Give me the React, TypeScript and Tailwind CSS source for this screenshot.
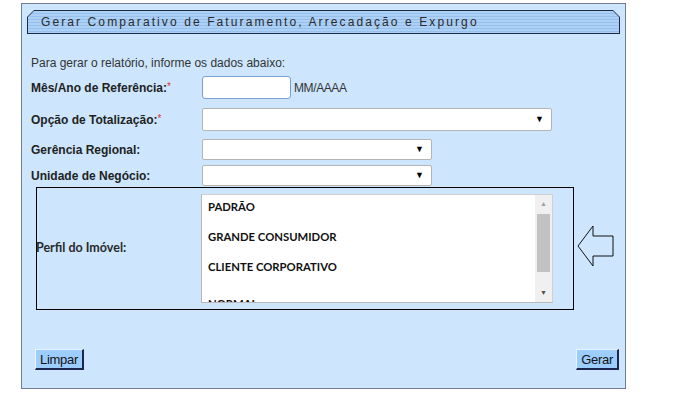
import React from "react"

const arial = "font-['Liberation_Sans',Arial,sans-serif]"

const SelectBox = ({ width }: { width: string }) => (
	<div
		className={`${width} h-full bg-white border border-[#b4b4b4] rounded-[2px] flex items-center justify-end pr-[7px]`}
	>
		<span className="text-[9px] leading-none text-black">▼</span>
	</div>
)

const Label = ({ text, required }: { text: string; required?: boolean }) => (
	<div className="w-[171px] shrink-0 text-[12px] font-bold text-[#222]">
		{text}
		{required && <span className="text-[#e03030] font-normal text-[10px] align-top">*</span>}
	</div>
)

const Button = ({ children }: { children: React.ReactNode }) => (
	<button
		className={`h-[21px] px-[4px] bg-[#9ccdfd] text-[13px] text-[#111] leading-none border border-t-[#e8f4ff] border-l-[#e8f4ff] border-b-[#1c2450] border-r-[#1c2450] border-b-2 border-r-2 tracking-[-0.3px] ${arial}`}
	>
		{children}
	</button>
)

const profiles = ["PADRÃO", "GRANDE CONSUMIDOR", "CLIENTE CORPORATIVO"]

export default function App() {
	return (
		<div className={`w-[676px] h-[400px] bg-white pt-[3px] pl-[21px] ${arial}`}>
			<div className="w-[605px] h-[386px] bg-[#cde6fd] border border-[#6f7f98] flex flex-col">
				{/* title bar */}
				<div className="mt-[6px] ml-[5px] w-[593px] h-[24px] bg-[#1b2a45] [clip-path:polygon(7px_0,calc(100%-7px)_0,100%_7px,100%_100%,0_100%,0_7px)] p-[1px]">
					<div className="w-full h-full bg-[image:repeating-linear-gradient(180deg,#acd0f6_0px,#acd0f6_2px,#98c0ec_2px,#98c0ec_3px)] [clip-path:polygon(6px_0,calc(100%-6px)_0,100%_6px,100%_100%,0_100%,0_6px)] flex items-center pl-[13px]">
						<span className="text-[12px] tracking-[2.1px] text-[#2a2a2a]">
							Gerar Comparativo de Faturamento, Arrecadação e Expurgo
						</span>
					</div>
				</div>

				<div className="pl-[9px] flex flex-col">
					<div className="mt-[22px] text-[12px] leading-[14px] text-[#333]">
						Para gerar o relatório, informe os dados abaixo:
					</div>

					<div className="mt-[6px] h-[23px] flex items-center">
						<Label text="Mês/Ano de Referência:" required />
						<div className="w-[89px] h-full bg-white border border-[#7b9ed6] rounded-[3px]" />
						<span className="ml-[3px] text-[12px] text-[#333] tracking-[-0.4px]">MM/AAAA</span>
					</div>

					<div className="mt-[9px] h-[23px] flex items-center">
						<Label text="Opção de Totalização:" required />
						<SelectBox width="w-[350px]" />
					</div>

					<div className="mt-[8px] h-[21px] flex items-center">
						<Label text="Gerência Regional:" />
						<SelectBox width="w-[230px]" />
					</div>

					<div className="mt-[5px] h-[21px] flex items-center">
						<Label text="Unidade de Negócio:" />
						<SelectBox width="w-[230px]" />
					</div>

					<div className="mt-[1px] flex items-center">
						<div className="ml-[5px] w-[538px] h-[123px] border border-black flex items-center">
							<div className="w-[165px] shrink-0 text-[12.5px] font-bold text-[#2a2a2a] font-['Lato',sans-serif] -ml-[1px]">
								Perfil do Imóvel:
							</div>
							<div className="w-[352px] h-[109px] bg-white border border-[#d0d0d0] border-l-[#b8b8b8] border-b-[#b8b8b8] flex overflow-hidden">
								<div className="flex-1 pl-[6px] pt-[5px] flex flex-col gap-[16px] font-['Lato',sans-serif] text-[11.3px] font-bold text-[#111] leading-[14px]">
									{profiles.map((p) => (
										<div key={p}>{p}</div>
									))}
									<div className="mt-[7px]">NORMAL</div>
								</div>
								<div className="w-[17px] h-full bg-[#f0f0f0] flex flex-col items-center">
									<div className="h-[19px] flex items-center text-[7px] text-[#a0a0a0]">▲</div>
									<div className="w-[13px] h-[58px] bg-[#c2c2c2]" />
									<div className="flex-1" />
									<div className="h-[17px] flex items-center text-[7px] text-[#505050]">▼</div>
								</div>
							</div>
						</div>
						<svg width="38" height="42" viewBox="0 0 38 42" className="ml-[3px] mt-[-5px]">
							<path d="M1 21 L16 1 L16 11 L36 11 L36 31 L16 31 L16 41 Z" fill="none" stroke="#111" strokeWidth="1" />
						</svg>
					</div>

					<div className="mt-[39px] flex justify-between pr-[6px] pl-[4px]">
						<Button>Limpar</Button>
						<Button>Gerar</Button>
					</div>
				</div>
			</div>
		</div>
	)
}
